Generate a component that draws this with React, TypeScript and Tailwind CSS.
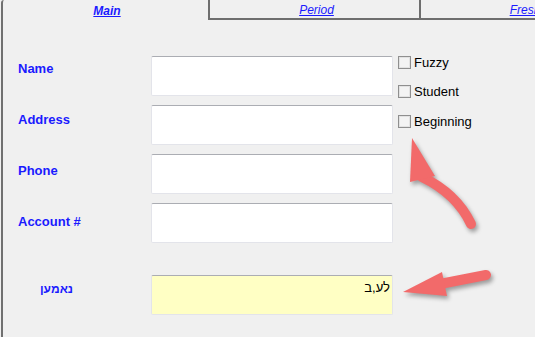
import React from "react";

const labelFont = { fontFamily: '"Liberation Sans", "DejaVu Sans", sans-serif' };

type Row = { label: string; pt: string };

const rows: Row[] = [
	{ label: "Name", pt: "pt-0" },
	{ label: "Address", pt: "pt-[2px]" },
	{ label: "Phone", pt: "pt-[4px]" },
	{ label: "Account #", pt: "pt-[6px]" },
];

const checks = [
	{ label: "Fuzzy", mt: "mt-0" },
	{ label: "Student", mt: "mt-[16px]" },
	{ label: "Beginning", mt: "mt-[17px]" },
];

function TextBox({ yellow, children }: { yellow?: boolean; children?: React.ReactNode }) {
	return (
		<div
			className={`h-[40px] w-[242px] shrink-0 rounded-[2px] border border-[#e3e4ea] border-t-[#abadb3] ${
				yellow ? "bg-[#ffffc4]" : "bg-white"
			}`}
		>
			{children}
		</div>
	);
}

function CheckBox({ label }: { label: string }) {
	return (
		<div className="flex h-[13px] items-center gap-[3px]">
			<span className="h-[13px] w-[13px] border border-[#8f8f8f] bg-[#f3f3f3] shadow-[inset_0_0_0_1px_#e2e2e2]" />
			<span className="text-[13px] leading-[15px] text-black">{label}</span>
		</div>
	);
}

export default function App() {
	return (
		<div className="relative h-[337px] w-[535px] overflow-hidden bg-[#f0f0f0] pl-px" style={labelFont}>
			<div className="mt-[2px] h-full rounded-tl-[3px] border-l-2 border-[#707070]">
				{/* Tabs */}
				<div className="-mt-[2px] flex h-[20px] whitespace-nowrap">
					<div className="flex w-[205px] shrink-0 justify-center pl-[3px] pt-[2px]">
						<span className="text-[12px] font-bold italic text-[#1a1aff] underline">Main</span>
					</div>
					<div className="flex w-[211px] shrink-0 justify-center border-b-2 border-l-2 border-[#6e6e6e] pl-[4px] pt-px">
						<span className="text-[12px] italic text-[#1a1aff] underline">Period</span>
					</div>
					<div className="flex w-[210px] shrink-0 justify-center border-b-2 border-l-2 border-[#6e6e6e] pt-px">
						<span className="text-[12px] italic text-[#1a1aff] underline">Fresh</span>
					</div>
				</div>

				{/* Form */}
				<div className="mt-[36px] flex">
					<div className="flex flex-col gap-[9px]">
						{rows.map((r) => (
							<div key={r.label} className="flex">
								<div className={`w-[148px] pl-[15px] ${r.pt}`}>
									<span className="text-[13px] font-bold leading-[15px] text-[#1a1aff]">{r.label}</span>
								</div>
								<TextBox />
							</div>
						))}
						<div className="mt-[23px] flex">
							<div className="w-[148px] pl-[37px] pt-px">
								<span dir="rtl" className="text-[12px] font-bold leading-[15px] text-[#1a1aff]">
									נאמען
								</span>
							</div>
							<TextBox yellow>
								<div dir="rtl" className="pr-[2px] pt-[4px] text-[13px] leading-[15px] text-black">
									לע,ב
								</div>
							</TextBox>
						</div>
					</div>
					<div className="ml-[5px] flex flex-col">
						{checks.map((c) => (
							<div key={c.label} className={c.mt}>
								<CheckBox label={c.label} />
							</div>
						))}
					</div>
				</div>
			</div>

			{/* Annotation arrows */}
			<svg className="absolute left-0 top-0" width="535" height="337" style={{ filter: "drop-shadow(2px 3px 2px rgba(0,0,0,0.35))" }}>
				<path d="M422 177 C 445 188, 462 205, 471 224" stroke="#f26a6a" strokeWidth="10" strokeLinecap="round" fill="none" />
				<polygon points="412,138 410,182 435,176" fill="#f26a6a" />
				<path d="M440 284 L 486 275" stroke="#f26a6a" strokeWidth="10" strokeLinecap="round" fill="none" />
				<polygon points="403,292 442,272 447,296" fill="#f26a6a" />
			</svg>
		</div>
	);
}
